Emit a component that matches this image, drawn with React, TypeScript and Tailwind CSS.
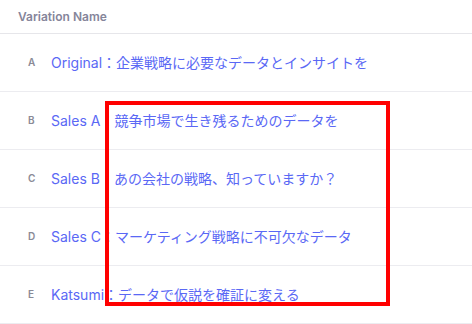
import React from "react";

const rows = [
  { key: "A", name: "Original", text: "企業戦略に必要なデータとインサイトを" },
  { key: "B", name: "Sales A", text: "競争市場で生き残るためのデータを" },
  { key: "C", name: "Sales B", text: "あの会社の戦略、知っていますか？" },
  { key: "D", name: "Sales C", text: "マーケティング戦略に不可欠なデータ" },
  { key: "E", name: "Katsumi", text: "データで仮説を確証に変える" },
];

const App: React.FC = () => {
  return (
    <div
      className="relative w-[472px] h-[324px] overflow-hidden bg-white"
      style={{ fontFamily: 'Inter, "Noto Sans CJK JP", sans-serif' }}
    >
      <div className="h-[34px] border-b border-[#e6e6ea] flex items-center pl-[18px]">
        <span className="text-[12px] font-semibold text-[#85859a]">Variation Name</span>
      </div>
      {rows.map((r) => (
        <div key={r.key} className="h-[58px] border-b border-[#ececf0] flex items-center pl-[28px]">
          <span className="w-[23px] text-[10px] font-semibold text-[#8a8a96]">{r.key}</span>
          <span className="text-[14px] text-[#5a68f5] whitespace-nowrap">
            {r.name}：{r.text}
          </span>
        </div>
      ))}
      {/* annotation box */}
      <div className="absolute left-[105px] top-[101px] w-[285px] h-[205px] border-4 border-[#ff0000]" />
    </div>
  );
};

export default App;
